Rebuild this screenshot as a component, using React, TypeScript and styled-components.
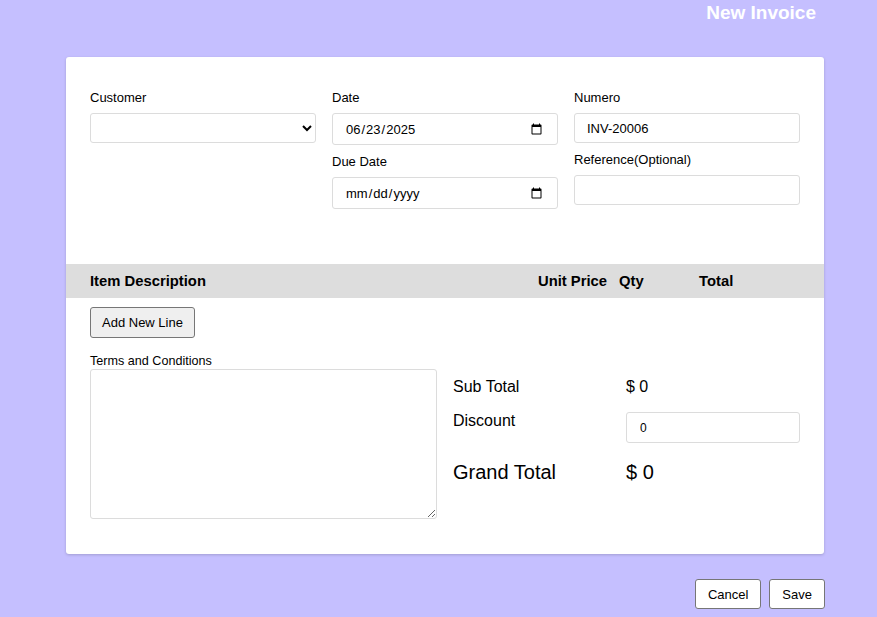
import React from "react";
import styled, { createGlobalStyle } from "styled-components";

const Global = createGlobalStyle`
  html, body { margin: 0; padding: 0; background: #c5bfff; }
  body { font-family: "Liberation Sans", Arial, sans-serif; color: #000; }
  * { box-sizing: border-box; }
`;

const Page = styled.div`
  padding: 0 53px 20px 66px;
  min-height: 617px;
`;

const TitleBar = styled.div`
  height: 57px;
  display: flex;
  justify-content: flex-end;
  padding: 2px 8px 0 0;
`;

const Title = styled.h1`
  margin: 0;
  font-size: 19px;
  line-height: 22px;
  font-weight: 700;
  color: #fff;
`;

const Card = styled.div`
  background: #fff;
  border-radius: 3px;
  box-shadow: 0 1px 3px rgba(0, 0, 0, 0.18);
  padding: 33px 24px 35px;
`;

const TopGrid = styled.div`
  display: grid;
  grid-template-columns: repeat(3, 1fr);
  column-gap: 16px;
  align-items: start;
`;

const Column = styled.div`
  display: flex;
  flex-direction: column;
  gap: 9px;
`;

const Field = styled.div`
  display: flex;
  flex-direction: column;
  gap: 8px;
`;

const Label = styled.label<{ $size?: number; $lh?: number }>`
  font-size: ${(p) => p.$size ?? 13}px;
  line-height: ${(p) => p.$lh ?? 15}px;
`;

const inputCss = `
  width: 100%;
  border: 1px solid #dcdcdc;
  border-radius: 3px;
  padding: 6px 12px;
  font-family: "Liberation Sans", Arial, sans-serif;
  font-size: 13px;
  color: #000;
  background: #fff;
  outline: none;
`;

const Input = styled.input`
  ${inputCss}
  height: 30px;
`;

const DateInput = styled.input`
  ${inputCss}
  height: 32px;
`;

const Select = styled.select`
  ${inputCss}
  height: 30px;
  padding: 4px 6px;
`;

const ItemsHeader = styled.div`
  margin: 55px -24px 0;
  height: 34px;
  background: #dddddd;
  padding: 0 24px;
  display: grid;
  grid-template-columns: 1fr 81px 80px 101px;
  align-items: center;
  font-size: 14.8px;
  font-weight: 700;
`;

const AddButton = styled.button`
  margin-top: 9px;
  height: 31px;
  padding: 0 11px;
  background: #efefef;
  border: 1px solid #767676;
  border-radius: 3px;
  font-family: "Liberation Sans", Arial, sans-serif;
  font-size: 13px;
  color: #000;
`;

const BottomGrid = styled.div`
  margin-top: 16px;
  display: grid;
  grid-template-columns: 1fr 1fr;
  column-gap: 16px;
`;

const TermsColumn = styled.div`
  display: flex;
  flex-direction: column;
  gap: 1px;
`;

const TextArea = styled.textarea`
  ${inputCss}
  height: 150px;
  resize: both;
`;

const Totals = styled.div`
  padding-top: 24px;
  display: flex;
  flex-direction: column;
  gap: 16px;
`;

const TotalRow = styled.div<{ $big?: boolean }>`
  display: grid;
  grid-template-columns: 173px 1fr;
  align-items: start;
  font-size: ${(p) => (p.$big ? 20 : 16)}px;
  line-height: ${(p) => (p.$big ? 23 : 18)}px;
  padding-top: ${(p) => (p.$big ? 2 : 0)}px;
`;

const DiscountInput = styled.input`
  ${inputCss}
  height: 31px;
  font-size: 12px;
  padding: 6px 13px;
`;

const Footer = styled.div`
  margin-top: 25px;
  display: flex;
  justify-content: flex-end;
  gap: 8px;
  margin-right: -1px;
`;

const FooterButton = styled.button`
  height: 30px;
  padding: 0 12px;
  background: #fff;
  border: 1px solid #767676;
  border-radius: 3px;
  font-family: "Liberation Sans", Arial, sans-serif;
  font-size: 13px;
  color: #000;
`;

export default function App() {
  return (
    <>
      <Global />
      <Page>
        <TitleBar>
          <Title>New Invoice</Title>
        </TitleBar>
        <Card>
          <TopGrid>
            <Column>
              <Field>
                <Label>Customer</Label>
                <Select defaultValue="">
                  <option value=""></option>
                </Select>
              </Field>
            </Column>
            <Column>
              <Field>
                <Label>Date</Label>
                <DateInput type="date" defaultValue="2025-06-23" />
              </Field>
              <Field>
                <Label>Due Date</Label>
                <DateInput type="date" />
              </Field>
            </Column>
            <Column>
              <Field>
                <Label>Numero</Label>
                <Input type="text" defaultValue="INV-20006" />
              </Field>
              <Field>
                <Label>Reference(Optional)</Label>
                <Input type="text" />
              </Field>
            </Column>
          </TopGrid>

          <ItemsHeader>
            <span>Item Description</span>
            <span>Unit Price</span>
            <span>Qty</span>
            <span>Total</span>
          </ItemsHeader>

          <AddButton type="button">Add New Line</AddButton>

          <BottomGrid>
            <TermsColumn>
              <Label $size={12.6} $lh={14}>Terms and Conditions</Label>
              <TextArea />
            </TermsColumn>
            <Totals>
              <TotalRow>
                <span>Sub Total</span>
                <span>$ 0</span>
              </TotalRow>
              <TotalRow>
                <span>Discount</span>
                <DiscountInput type="number" defaultValue={0} />
              </TotalRow>
              <TotalRow $big>
                <span>Grand Total</span>
                <span>$ 0</span>
              </TotalRow>
            </Totals>
          </BottomGrid>
        </Card>
        <Footer>
          <FooterButton type="button">Cancel</FooterButton>
          <FooterButton type="button">Save</FooterButton>
        </Footer>
      </Page>
    </>
  );
}
